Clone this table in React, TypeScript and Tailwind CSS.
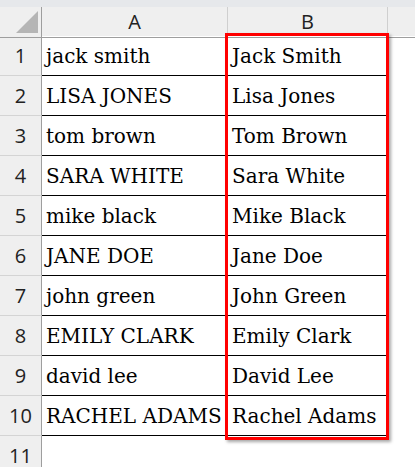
import React from "react"

const rows: [string, string][] = [
  ["jack smith", "Jack Smith"],
  ["LISA JONES", "Lisa Jones"],
  ["tom brown", "Tom Brown"],
  ["SARA WHITE", "Sara White"],
  ["mike black", "Mike Black"],
  ["JANE DOE", "Jane Doe"],
  ["john green", "John Green"],
  ["EMILY CLARK", "Emily Clark"],
  ["david lee", "David Lee"],
  ["RACHEL ADAMS", "Rachel Adams"],
]

const cols = "grid grid-cols-[42px_186px_160px_1fr]"
const headFont = { fontFamily: '"Open Sans", "Liberation Sans", sans-serif' }
const cellFont = { fontFamily: '"DejaVu Serif", "Liberation Serif", serif' }

export default function App() {
  return (
    <div className="relative w-[415px] h-[467px] overflow-hidden bg-white">
      <div className="h-[7px] bg-[#e6e8eb]" />
      <div className={`${cols} h-[29px] bg-[#efefef] text-[20px] text-[#222]`} style={headFont}>
        <div className="relative border-r border-b border-[#9e9e9e]">
          <svg className="absolute left-[16px] top-[4px]" width="22" height="22" viewBox="0 0 22 22">
            <polygon points="22,0 22,22 0,22" fill="#b5b5b5" />
          </svg>
        </div>
        <div className="flex items-center justify-center border-r border-b border-r-[#cfcfcf] border-b-[#9e9e9e]">A</div>
        <div className="flex items-center justify-center border-r border-b border-r-[#cfcfcf] border-b-[#9e9e9e]">B</div>
        <div className="border-b border-[#9e9e9e]" />
      </div>
      {rows.map(([a, b], i) => (
        <div key={i} className={`${cols} h-[40px]`}>
          <div
            className="flex items-center justify-center bg-[#efefef] border-r border-b border-r-[#9e9e9e] border-b-[#d4d4d4] text-[20px] text-[#222]"
            style={headFont}
          >
            {i + 1}
          </div>
          <div className="flex items-center pl-[4px] border-r border-b border-black text-[20px] text-black whitespace-nowrap" style={cellFont}>
            {a}
          </div>
          <div className="flex items-center pl-[4px] border-r border-b border-black text-[20px] text-black whitespace-nowrap" style={cellFont}>
            {b}
          </div>
          <div />
        </div>
      ))}
      <div className={`${cols} h-[40px]`}>
        <div
          className="flex items-center justify-center bg-[#efefef] border-r border-[#9e9e9e] text-[20px] text-[#222]"
          style={headFont}
        >
          11
        </div>
      </div>
      <div className="absolute left-[225px] top-[33px] w-[164px] h-[407px] border-[3px] border-[#ff0000] shadow-[2px_2px_3px_rgba(0,0,0,0.35)]" />
    </div>
  )
}
